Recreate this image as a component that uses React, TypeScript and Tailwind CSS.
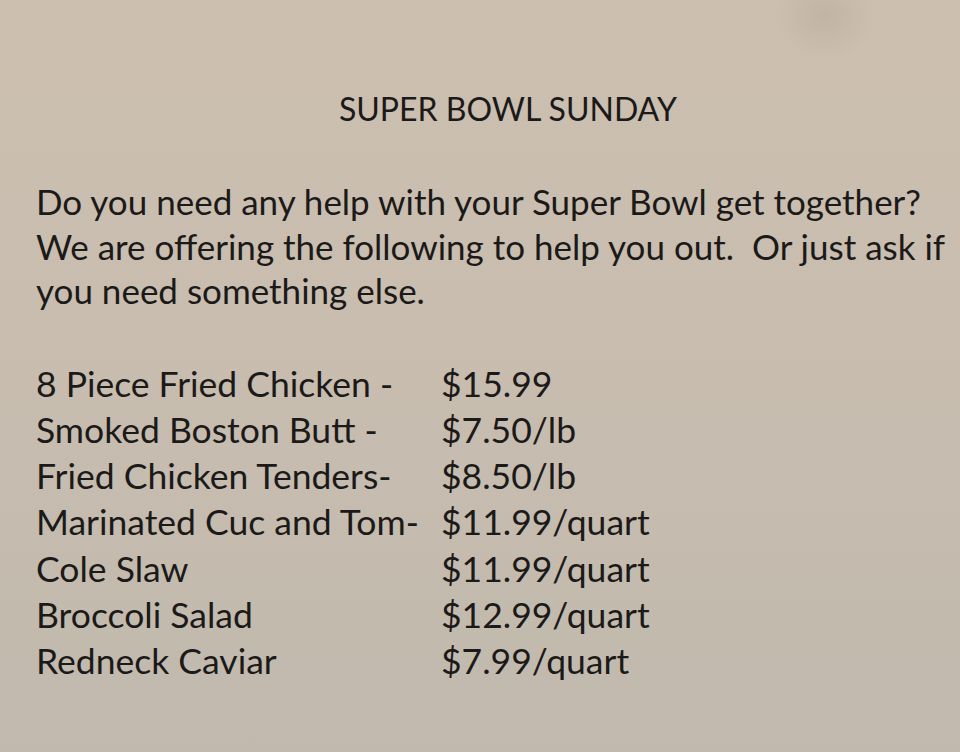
const items = [
  { name: '8 Piece Fried Chicken -', price: '$15.99' },
  { name: 'Smoked Boston Butt -', price: '$7.50/lb' },
  { name: 'Fried Chicken Tenders-', price: '$8.50/lb' },
  { name: 'Marinated Cuc and Tom-', price: '$11.99/quart' },
  { name: 'Cole Slaw', price: '$11.99/quart' },
  { name: 'Broccoli Salad', price: '$12.99/quart' },
  { name: 'Redneck Caviar', price: '$7.99/quart' },
];

export default function App() {
  return (
    <div
      className="w-[960px] h-[752px] overflow-hidden text-[#1b1a19] bg-[radial-gradient(ellipse_50px_45px_at_825px_15px,rgba(150,135,120,0.2),transparent),linear-gradient(180deg,#ccbfb0_0%,#c8bdaf_45%,#c1b9ae_100%)]"
      style={{ fontFamily: 'Lato, "Open Sans", sans-serif' }}
    >
      <h1 className="pt-[89px] pl-[56px] text-center text-[32px] leading-[40px] font-normal">
        SUPER BOWL SUNDAY
      </h1>

      <p className="mt-[50px] pl-[36px] text-[35px] leading-[44.5px] whitespace-nowrap">
        Do you need any help with your Super Bowl get together?
        <br />
        We are offering the following to help you out.&nbsp; Or just ask if
        <br />
        you need something else.
      </p>

      <div className="mt-[48px] pl-[36px] flex flex-col">
        {items.map((it) => (
          <div key={it.name} className="flex text-[35.5px] leading-[46.3px]">
            <span className="w-[405px] shrink-0 whitespace-nowrap">{it.name}</span>
            <span className="whitespace-nowrap">{it.price}</span>
          </div>
        ))}
      </div>
    </div>
  );
}
